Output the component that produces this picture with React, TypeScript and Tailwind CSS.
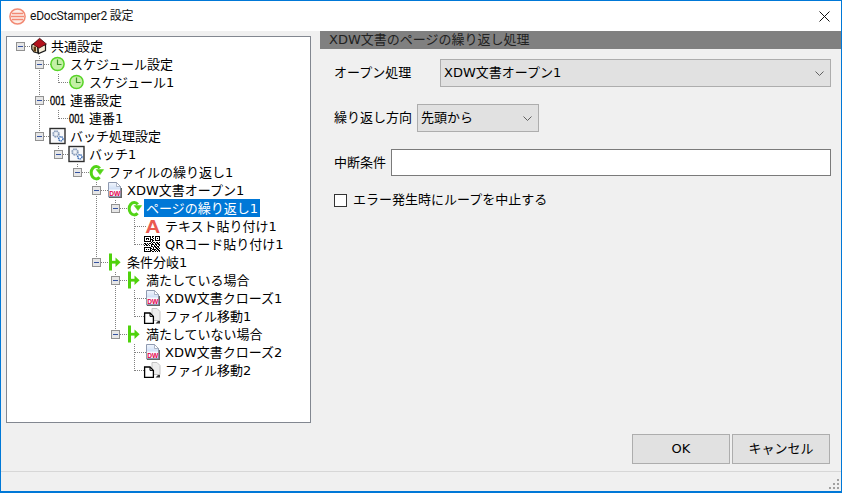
import type { ReactNode } from "react";

type IconName = "house" | "clock" | "serial" | "gears" | "loop" | "doc" | "text" | "qr" | "branch" | "move";

type Node = { depth: number; label: string; icon: IconName; open?: boolean; selected?: boolean };

const nodes: Node[] = [
  { depth: 0, label: "共通設定", icon: "house", open: true },
  { depth: 1, label: "スケジュール設定", icon: "clock", open: true },
  { depth: 2, label: "スケジュール1", icon: "clock" },
  { depth: 1, label: "連番設定", icon: "serial", open: true },
  { depth: 2, label: "連番1", icon: "serial" },
  { depth: 1, label: "バッチ処理設定", icon: "gears", open: true },
  { depth: 2, label: "バッチ1", icon: "gears", open: true },
  { depth: 3, label: "ファイルの繰り返し1", icon: "loop", open: true },
  { depth: 4, label: "XDW文書オープン1", icon: "doc", open: true },
  { depth: 5, label: "ページの繰り返し1", icon: "loop", open: true, selected: true },
  { depth: 6, label: "テキスト貼り付け1", icon: "text" },
  { depth: 6, label: "QRコード貼り付け1", icon: "qr" },
  { depth: 4, label: "条件分岐1", icon: "branch", open: true },
  { depth: 5, label: "満たしている場合", icon: "branch", open: true },
  { depth: 6, label: "XDW文書クローズ1", icon: "doc" },
  { depth: 6, label: "ファイル移動1", icon: "move" },
  { depth: 5, label: "満たしていない場合", icon: "branch", open: true },
  { depth: 6, label: "XDW文書クローズ2", icon: "doc" },
  { depth: 6, label: "ファイル移動2", icon: "move" },
];

const qrRows = [
  "1111111011011111",
  "1000001010010001",
  "1011101001010101",
  "1010101110010001",
  "1000001011011111",
  "1111111010000000",
  "0000000101101101",
  "1101011010010110",
  "0110100111011011",
  "1011010100101001",
  "0000000110110110",
  "1111111001011010",
  "1000001101001101",
  "1010101011110110",
  "1000001100101011",
  "1111111011010101",
];

function Icon({ name }: { name: IconName }) {
  let body: ReactNode = null;
  if (name === "house") {
    body = (
      <>
        <path d="M0.8 7 L6.5 3.5 L7 15 L3 14 L0.8 11Z" fill="#e4d6b4" stroke="#1c1c1c" strokeWidth="1.2" />
        <path d="M7 9 L14.5 6.5 L14.5 12.5 L7.5 15.5Z" fill="#f5edd8" stroke="#1c1c1c" strokeWidth="1.2" />
        <path d="M2 6.2 L8.6 0.3 L15.4 6 L8 10.2Z" fill="#b3121d" stroke="#3a0d0d" strokeWidth="0.8" />
        <rect x="2.6" y="8.6" width="2.4" height="5" fill="#5c3a12" />
      </>
    );
  } else if (name === "clock") {
    body = (
      <>
        <circle cx="7.5" cy="8" r="6.6" fill="#c4f0a6" stroke="#58d428" strokeWidth="1.5" />
        <path d="M7.5 3.5 V8.5 H11.5" fill="none" stroke="#3c8f2a" strokeWidth="1.2" />
      </>
    );
  } else if (name === "serial") {
    body = (
      <text x="0" y="12.6" fontSize="12" fill="#000" stroke="#000" strokeWidth="0.3" textLength="15.5" lengthAdjust="spacingAndGlyphs" fontFamily="Liberation Sans, sans-serif">
        001
      </text>
    );
  } else if (name === "gears") {
    body = (
      <>
        <rect x="0" y="0.5" width="15" height="15" fill="#f8f9fb" stroke="#2e2e2e" strokeWidth="1.4" />
        <circle cx="6" cy="6" r="2.8" fill="#eef2f7" stroke="#8296b4" strokeWidth="1.8" strokeDasharray="1.5 0.7" />
        <circle cx="10.8" cy="10.8" r="2.1" fill="#fff" stroke="#3f6fb5" strokeWidth="1.6" strokeDasharray="1.3 0.6" />
      </>
    );
  } else if (name === "loop") {
    body = (
      <>
        <path d="M11.6 13.2 A5 6.2 0 1 1 11.8 4.4" fill="none" stroke="#52d416" strokeWidth="3" />
        <path d="M8.2 5.6 L15.6 5.6 L12 10.6 Z" fill="#52d416" stroke="#52d416" strokeWidth="0.6" />
      </>
    );
  } else if (name === "doc") {
    body = (
      <>
        <defs>
          <linearGradient id="docFill" x1="0" y1="0" x2="0" y2="1">
            <stop offset="0" stopColor="#f2f6fd" />
            <stop offset="1" stopColor="#a9c4ee" />
          </linearGradient>
        </defs>
        <path d="M1.5 0.5 H9.5 L13.5 4.5 V15 H1.5Z" fill="url(#docFill)" stroke="#8f9ab0" />
        <path d="M9.5 0.5 V4.5 H13.5Z" fill="#fff" stroke="#8f9ab0" strokeWidth="0.7" />
        <path d="M2 15.4 H14.4 V6" fill="none" stroke="#666" strokeWidth="1.2" />
        <rect x="2" y="7.5" width="11" height="6.5" fill="#f6f8fd" />
        <text x="2.2" y="13.6" fontSize="8" fontWeight="700" fill="#e6004c" fontFamily="Liberation Sans, sans-serif" textLength="11" lengthAdjust="spacingAndGlyphs">
          DW
        </text>
      </>
    );
  } else if (name === "text") {
    body = (
      <text x="0.3" y="15.2" fontSize="18" fontWeight="700" fill="#ea5a50" fontFamily="Liberation Sans, sans-serif" textLength="15" lengthAdjust="spacingAndGlyphs">
        A
      </text>
    );
  } else if (name === "qr") {
    body = qrRows.map((row, y) =>
      row.split("").map((c, x) => (c === "1" ? <rect key={x + "-" + y} x={x - 1} y={y} width="1" height="1" fill="#000" /> : null)),
    );
  } else if (name === "branch") {
    body = (
      <>
        <rect x="2" y="-0.5" width="3" height="17" fill="#4fd20c" />
        <rect x="4" y="6.8" width="5" height="2.8" fill="#4fd20c" />
        <path d="M8.5 3.4 L13.6 8.2 L8.5 13Z" fill="#4fd20c" />
      </>
    );
  } else if (name === "move") {
    body = (
      <>
        <path d="M7 0.5 H12 L15 3.5 V12.5 H7Z" fill="#eeeeee" stroke="#c4c4c4" />
        <path d="M-0.4 5 H5 L8.4 8.4 V15.4 H-0.4Z" fill="#fff" stroke="#000" strokeWidth="1.3" />
        <path d="M5 5 V8.4 H8.4" fill="none" stroke="#000" />
        <path d="M10.5 15.5 L13 13 V15.5Z" fill="#333" />
        <rect x="13" y="13" width="2" height="2.5" fill="#333" />
      </>
    );
  }
  return (
    <svg width="16" height="16" viewBox="0 0 16 16" className="shrink-0 overflow-visible" shapeRendering={name === "qr" ? "crispEdges" : undefined}>
      {body}
    </svg>
  );
}

function Expander() {
  return (
    <span className="flex w-[9px] h-[9px] items-center justify-center border border-[#919191] bg-[#e6e6e6]">
      <span className="block w-[5px] h-px bg-[#3553a0]" />
    </span>
  );
}

// dotted guides of the tree, worked out from the depths
function TreeLines() {
  const lines: ReactNode[] = [];
  nodes.forEach((node, i) => {
    const y = 9.5 + i * 18;
    const x = 9.5 + 19 * node.depth + 4;
    if (node.depth > 0) {
      let p = i - 1;
      while (nodes[p].depth >= node.depth) p--;
      lines.push(<line key={"v" + i} x1={x} x2={x} y1={9.5 + p * 18 + 9} y2={y} />);
    }
    lines.push(<line key={"h" + i} x1={x} x2={x + 11} y1={y} y2={y} />);
  });
  return (
    <svg width="303" height="384" className="absolute left-0 top-0" stroke="#808080" strokeDasharray="1 1" shapeRendering="crispEdges">
      {lines}
    </svg>
  );
}

function TreeRow({ node }: { node: Node }) {
  return (
    <div className="relative flex h-[18px] items-center" style={{ paddingLeft: 9 + 19 * node.depth }}>
      <span className="flex w-[9px] h-[9px] shrink-0">{node.open && <Expander />}</span>
      <span className="ml-[6px] flex">
        <Icon name={node.icon} />
      </span>
      <span className={"ml-[2px] px-[2px] h-[18px] leading-[20px] whitespace-nowrap " + (node.selected ? "bg-[#0078d7] text-white" : "text-black")}>
        {node.label}
      </span>
    </div>
  );
}

function Combo({ value, className }: { value: string; className: string }) {
  return (
    <div className={"flex items-center justify-between border border-[#adadad] bg-[#e1e1e1] pl-[3px] pr-[6px] text-black " + className}>
      <span>{value}</span>
      <svg width="9" height="5" viewBox="0 0 9 5" fill="none" stroke="#606060">
        <path d="M0.5 0.5 L4.5 4.5 L8.5 0.5" />
      </svg>
    </div>
  );
}

export default function App() {
  return (
    <div className="flex h-[493px] w-[842px] flex-col overflow-hidden border border-[#0078d7] border-b-2 bg-[#f0f0f0] text-[13px] text-black [font-family:'DejaVu_Sans','Noto_Sans_CJK_JP',sans-serif]">
      {/* title bar */}
      <div className="flex h-[30px] shrink-0 items-center bg-white pl-[8px] pr-[8px]">
        <svg width="17" height="17" viewBox="0 0 17 17" fill="none" className="shrink-0">
          <circle cx="8.5" cy="8.5" r="7.6" fill="#fdeee8" stroke="#f28a74" strokeWidth="1.5" />
          <path d="M3 5.5 H14 M2 8.5 H15 M3 11.5 H14" stroke="#f28a74" strokeWidth="1.3" />
        </svg>
        <span className="ml-[4px] text-[12px] tracking-[-0.2px] text-[#111] [font-family:'Roboto','Noto_Sans_CJK_JP',sans-serif]">eDocStamper2 設定</span>
        <svg width="11" height="11" viewBox="0 0 11 11" className="ml-auto mr-[3px]" stroke="#111" strokeWidth="1">
          <path d="M0.5 0.5 L10.5 10.5 M10.5 0.5 L0.5 10.5" />
        </svg>
      </div>

      <div className="flex h-[403px] shrink-0">
        {/* tree */}
        <div className="relative ml-[5px] mt-[5px] h-[387px] w-[305px] shrink-0 border border-[#828790] bg-white">
          <TreeLines />
          {nodes.map((node) => (
            <TreeRow key={node.label} node={node} />
          ))}
        </div>

        {/* settings */}
        <div className="ml-[9px] flex min-w-0 flex-1 flex-col">
          <div className="h-[18px] bg-[#808080] pl-[9px] leading-[18px] text-[#222]">XDW文書のページの繰り返し処理</div>
          <div className="flex flex-col pl-[14px] pr-[10px]">
            <div className="mt-[10px] flex h-[28px] items-center">
              <span className="w-[106px] shrink-0">オープン処理</span>
              <Combo value="XDW文書オープン1" className="h-full flex-1" />
            </div>
            <div className="mt-[17px] flex h-[28px] items-center">
              <span className="w-[83px] shrink-0">繰り返し方向</span>
              <Combo value="先頭から" className="h-full w-[122px]" />
            </div>
            <div className="mt-[17px] flex h-[27px] items-center">
              <span className="w-[57px] shrink-0">中断条件</span>
              <div className="h-full flex-1 border border-[#7a7a7a] bg-white" />
            </div>
            <div className="mt-[18px] flex h-[13px] items-center">
              <span className="block h-[13px] w-[13px] shrink-0 border border-[#333] bg-white" />
              <span className="mb-[2px] ml-[6px] whitespace-nowrap">エラー発生時にループを中止する</span>
            </div>
          </div>
        </div>
      </div>

      {/* buttons */}
      <div className="flex h-[37px] shrink-0 items-start justify-end gap-[2px] pr-[11px]">
        <button className="h-[30px] w-[98px] border border-[#adadad] bg-[#e1e1e1]">OK</button>
        <button className="h-[30px] w-[98px] border border-[#adadad] bg-[#e1e1e1]">キャンセル</button>
      </div>

      {/* status strip */}
      <div className="flex flex-1 items-end justify-end border-t border-[#d7d7d7] bg-[#f0f0f0]">
        <svg width="12" height="12" viewBox="0 0 12 12" fill="#a0a0a0" className="mb-px mr-px">
          <rect x="9" y="1" width="2" height="2" />
          <rect x="5" y="5" width="2" height="2" />
          <rect x="9" y="5" width="2" height="2" />
          <rect x="1" y="9" width="2" height="2" />
          <rect x="5" y="9" width="2" height="2" />
          <rect x="9" y="9" width="2" height="2" />
        </svg>
      </div>
    </div>
  );
}
